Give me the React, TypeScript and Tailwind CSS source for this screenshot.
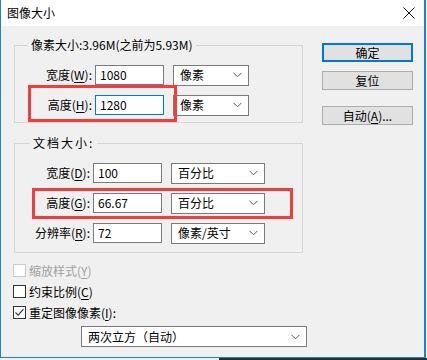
import React from "react";

function Chevron() {
  return (
    <svg width="9" height="6" viewBox="0 0 9 6" className="shrink-0">
      <polyline points="0.5,0.8 4.5,4.8 8.5,0.8" fill="none" stroke="#5a5a5a" strokeWidth="1" />
    </svg>
  );
}

function Select({ value, w }: { value: string; w: string }) {
  return (
    <div className={`${w} h-[21px] ml-[9px] bg-white border border-[#7a7a7a] flex items-center justify-between pl-[6px] pr-[6px]`}>
      <span>{value}</span>
      <Chevron />
    </div>
  );
}

function Field({
  label,
  hot,
  value,
  unit,
  labelW,
  selW,
  focused,
}: {
  label: string;
  hot: string;
  value: string;
  unit: string;
  labelW: string;
  selW: string;
  focused?: boolean;
}) {
  return (
    <div className="flex items-center h-[30px]">
      <div className={`${labelW} text-right shrink-0`}>
        {label}(<span className="underline underline-offset-2">{hot}</span>):
      </div>
      <div
        className={`w-[69px] h-[20px] bg-white flex items-center pl-[4px] ml-[3px] border ${
          focused ? "border-[#0078d7]" : "border-[#7a7a7a]"
        }`}
      >
        {value}
      </div>
      <Select value={unit} w={selW} />
    </div>
  );
}

function Check({ label, hot, checked, disabled, colon }: { label: string; hot: string; checked?: boolean; disabled?: boolean; colon?: boolean }) {
  return (
    <div className={`flex items-center h-[21px] ${disabled ? "text-[#a0a0a0]" : "text-black"}`}>
      <div
        className={`w-[13px] h-[13px] bg-white border flex items-center justify-center ${
          disabled ? "border-[#cccccc]" : "border-[#333333]"
        }`}
      >
        {checked && (
          <svg width="11" height="11" viewBox="0 0 11 11">
            <polyline points="1.5,5.5 4.2,8.2 9.5,2.2" fill="none" stroke="#333" strokeWidth="1.1" />
          </svg>
        )}
      </div>
      <span className="ml-[3px]">
        {label}(<span className="underline underline-offset-2">{hot}</span>){colon ? ":" : ""}
      </span>
    </div>
  );
}

function Button({ children, primary, className = "" }: { children: React.ReactNode; primary?: boolean; className?: string }) {
  return (
    <div
      className={`w-[91px] h-[19px] bg-[#e1e1e1] flex items-center justify-center ${
        primary ? "border-2 border-[#0078d7]" : "border border-[#adadad]"
      } ${className}`}
    >
      {children}
    </div>
  );
}

export default function App() {
  return (
    <div className="w-[427px] h-[360px] relative overflow-hidden bg-white text-[12px] leading-[16px] text-black font-['Noto_Sans_CJK_SC','Microsoft_YaHei',sans-serif]">
      <div className="w-[426px] h-[358px] border-l border-r-2 border-b border-[#1883d7] flex flex-col">
        {/* title bar */}
        <div className="h-[26px] bg-white flex items-center justify-between pl-[6px] pr-[9px] shrink-0">
          <span className="text-[12px]">图像大小</span>
          <svg width="12" height="12" viewBox="0 0 12 12">
            <path d="M0.5 0.5 L11.5 11.5 M11.5 0.5 L0.5 11.5" stroke="#111" strokeWidth="1" />
          </svg>
        </div>

        {/* body */}
        <div className="flex-1 bg-[#f0f0f0] flex pl-[12px]">
          <div className="w-[290px] pt-[11px]">
            <fieldset className="ml-[1px] w-[289px] border border-[#d5d5d5] pb-[2px]">
              <legend className="ml-[13px] px-[3px] leading-[16px]">像素大小:3.96M(之前为5.93M)</legend>
              <div className="mt-[7px]">
                <Field label="宽度" hot="W" value="1080" unit="像素" labelW="w-[77px]" selW="w-[76px]" />
                <Field label="高度" hot="H" value="1280" unit="像素" labelW="w-[77px]" selW="w-[76px]" focused />
              </div>
            </fieldset>

            <fieldset className="ml-[1px] mt-[12px] w-[289px] border border-[#d5d5d5] pb-[4px]">
              <legend className="ml-[15px] px-[3px] leading-[16px] tracking-[2px]">文档大小:</legend>
              <div className="mt-[7px]">
                <Field label="宽度" hot="D" value="100" unit="百分比" labelW="w-[75px]" selW="w-[94px]" />
                <Field label="高度" hot="G" value="66.67" unit="百分比" labelW="w-[75px]" selW="w-[94px]" />
                <Field label="分辨率" hot="R" value="72" unit="像素/英寸" labelW="w-[75px]" selW="w-[94px]" />
              </div>
            </fieldset>

            <div className="mt-[7px]">
              <Check label="缩放样式" hot="Y" disabled />
              <Check label="约束比例" hot="C" />
              <Check label="重定图像像素" hot="I" checked colon />
            </div>

            <div className="mt-[3px] ml-[68px] w-[226px] h-[21px] bg-white border border-[#7a7a7a] flex items-center justify-between pl-[6px] pr-[6px]">
              <span>两次立方（自动）</span>
              <Chevron />
            </div>
          </div>

          <div className="ml-[19px] pt-[17px]">
            <Button primary>确定</Button>
            <Button className="mt-[9px]">复位</Button>
            <Button className="mt-[16px]">
              自动(<span className="underline underline-offset-2">A</span>)...
            </Button>
          </div>
        </div>
      </div>
      <div className="flex h-[2px]">
        <div className="w-[219px] bg-[#f0f0f0]" />
        <div className="flex-1 bg-[#2b2b2b]" />
      </div>

      {/* annotation boxes */}
      <div className="absolute left-[28px] top-[85px] w-[149px] h-[37px] border-[3px] border-[#f33d3d] pointer-events-none" />
      <div className="absolute left-[32px] top-[188px] w-[261px] h-[31px] border-[3px] border-[#f33d3d] pointer-events-none" />
    </div>
  );
}
